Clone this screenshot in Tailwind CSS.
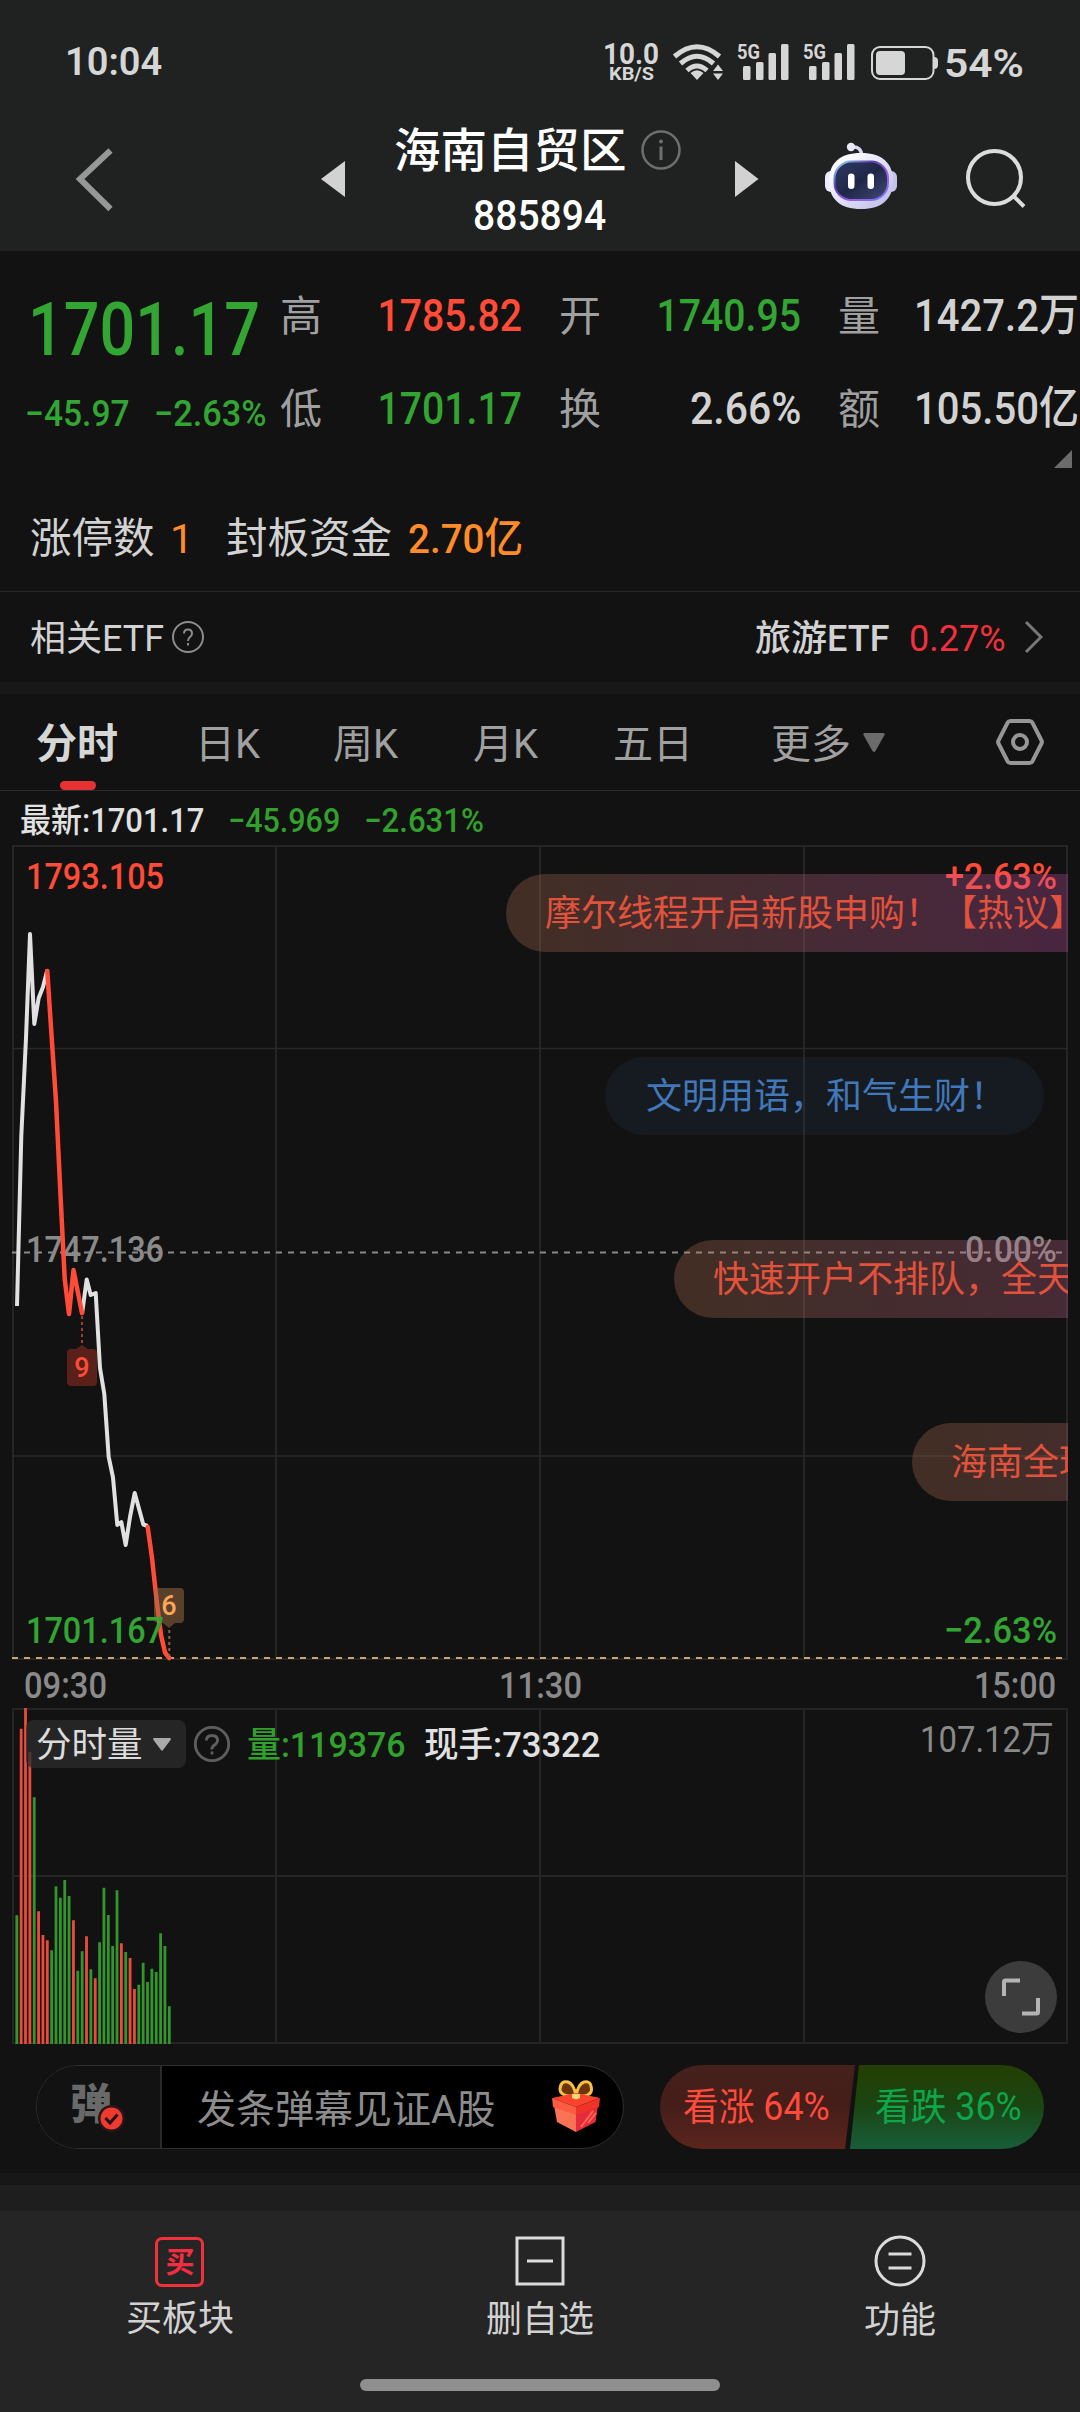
<!DOCTYPE html>
<html lang="zh-CN">
<head>
<meta charset="utf-8">
<meta name="viewport" content="width=1080">
<title>海南自贸区 885894</title>
<script src="https://cdn.jsdelivr.net/npm/@tailwindcss/browser@4"></script>
</head>
<body class="w-[1080px] h-[2412px] overflow-hidden bg-[#121212] text-[#d2d2d2] font-[Roboto,'Noto_Sans_CJK_SC',sans-serif] whitespace-nowrap">

<!-- status bar + title -->
<header class="h-[251px] bg-[#202221]">
  <div class="h-[124px] pl-[65px] pr-[56px] flex items-center justify-between">
    <span class="text-[38px] leading-none font-semibold text-[#d6d6d6]">10:04</span>
    <svg class="w-[424px] h-[124px]" viewBox="600 0 424 124" fill="#d6d6d6">
      <text x="603" y="64" font-size="29" font-weight="700" textLength="56" lengthAdjust="spacingAndGlyphs">10.0</text>
      <text x="609" y="80" font-size="19" font-weight="700" textLength="45" lengthAdjust="spacingAndGlyphs">KB/S</text>
      <g fill="none" stroke="#d6d6d6" stroke-width="5">
        <path d="M674.500 56.500Q697 37 719.500 56.500"/>
        <path d="M680.500 63.500Q697 49 713.500 63.500"/>
        <path d="M687 70.500Q697 61.500 707 70.500"/>
      </g>
      <path d="M690.500 73Q697 67.500 703.500 73L697 80ZM713 71h10l-5-6.500ZM713 73.500h10l-5 6.500Z"/>
      <text x="737" y="59" font-size="21" font-weight="700" textLength="23" lengthAdjust="spacingAndGlyphs">5G</text>
      <rect x="743" y="66" width="7.500" height="14" rx="1.500"/><rect x="756" y="62" width="7.500" height="18" rx="1.500"/><rect x="768.500" y="53" width="7.500" height="27" rx="1.500"/><rect x="781" y="44" width="7.500" height="36" rx="1.500"/>
      <text x="803" y="59" font-size="21" font-weight="700" textLength="23" lengthAdjust="spacingAndGlyphs">5G</text>
      <rect x="809" y="66" width="7.500" height="14" rx="1.500"/><rect x="822" y="62" width="7.500" height="18" rx="1.500"/><rect x="834.500" y="53" width="7.500" height="27" rx="1.500"/><rect x="847" y="44" width="7.500" height="36" rx="1.500"/>
      <rect x="872" y="47" width="61.500" height="32" rx="8" fill="none" stroke="#d6d6d6" stroke-width="2"/>
      <rect x="876" y="51" width="29" height="24" rx="4"/>
      <path d="M934 57q4 0 4 4v4q0 4-4 4Z"/>
      <text x="944" y="76.500" font-size="38" font-weight="600" textLength="80" lengthAdjust="spacingAndGlyphs">54%</text>
    </svg>
  </div>
  <div class="h-[127px] flex items-start">
    <svg class="w-[390px] h-[127px]" viewBox="0 124 390 127">
      <path d="M110.500 150.500L80 179L110.500 209" fill="none" stroke="#979797" stroke-width="6"/>
      <path d="M321 179L345 161V197Z" fill="#d2d2d2"/>
    </svg>
    <div class="w-[300px] flex flex-col">
      <div class="h-[52px] pl-[4px] flex items-center gap-[14px]">
        <h1 class="pt-[2px] text-[46.500px] leading-[52px] font-medium text-white">海南自贸区</h1>
        <svg class="w-[40px] h-[40px]" viewBox="0 0 40 40"><circle cx="20" cy="20" r="18.500" fill="none" stroke="#6e6e6e" stroke-width="2.500"/><path d="M20 16.500V30" stroke="#6e6e6e" stroke-width="3"/><circle cx="20" cy="11.500" r="2" fill="#6e6e6e"/></svg>
      </div>
      <div class="h-[60px] w-[300px] text-center text-[42px] leading-[80px] font-medium text-white"><span class="inline-block scale-x-[.93]">885894</span></div>
    </div>
    <svg class="w-[390px] h-[127px]" viewBox="690 124 390 127">
      <defs>
        <linearGradient id="head" x1="0" y1="0" x2="1" y2="1"><stop offset=".2" stop-color="#fbfaff"/><stop offset="1" stop-color="#b9b8e6"/></linearGradient>
        <linearGradient id="visor" x1="0" y1="0" x2="1" y2="1"><stop offset="0" stop-color="#323a66"/><stop offset=".5" stop-color="#1f2748"/><stop offset="1" stop-color="#414a74"/></linearGradient>
        <linearGradient id="rim" x1="0" y1="0" x2="1" y2="1"><stop offset="0" stop-color="#8fe6f5"/><stop offset=".35" stop-color="#5b3fae"/><stop offset=".65" stop-color="#a05ae6"/><stop offset="1" stop-color="#6d7bff"/></linearGradient>
      </defs>
      <path d="M735 161L758.500 179L735 197Z" fill="#d2d2d2"/>
      <path d="M852 147Q861 146 862 156" fill="none" stroke="#d9d6f2" stroke-width="3.500"/>
      <circle cx="851" cy="147" r="4.200" fill="#eae8fb"/>
      <rect x="825" y="171" width="12" height="21" rx="6" fill="#eceafb"/><rect x="885" y="171" width="12" height="21" rx="6" fill="#c6c4ea"/>
      <path d="M861 153C882 153 893 163 893 181C893 199 882 209 861 209C840 209 829 199 829 181C829 163 840 153 861 153Z" fill="url(#head)"/>
      <rect x="834.500" y="161.500" width="53.500" height="38.500" rx="17" fill="url(#visor)" stroke="url(#rim)" stroke-width="2"/>
      <rect x="848" y="173.500" width="6.500" height="15.500" rx="3.250" fill="#fff"/><rect x="867.500" y="173.500" width="6.500" height="15.500" rx="3.250" fill="#fff"/>
      <circle cx="994.500" cy="177.500" r="26.500" fill="none" stroke="#dcdcdc" stroke-width="4"/>
      <path d="M1013.500 196L1024 206.500" stroke="#dcdcdc" stroke-width="4"/>
    </svg>
  </div>
</header>

<!-- quote -->
<section class="h-[340px] flex flex-col">
  <div class="h-[229px] pt-[18px] flex">
    <div class="w-[280px]">
      <div class="h-[118px] pl-[28px] text-[74px] leading-[121px] font-medium text-[#32a532]"><span class="inline-block origin-left scale-x-[.85]">1701.17</span></div>
      <div class="h-[52px] pl-[25px] text-[36.500px] leading-[54px] font-medium text-[#32a532] flex">
        <span class="w-[129px]"><span class="inline-block origin-left scale-x-[.92]">−45.97</span></span>
        <span class="inline-block origin-left scale-x-[.94]">−2.63%</span>
      </div>
    </div>
    <dl class="grid grid-cols-[60px_182px_97px_182px_96px_183px] auto-rows-[93px] leading-[94px] text-[45px] font-medium">
      <dt class="pt-[1px] text-[42px] font-normal text-[#a0a0a0]">高</dt><dd class="text-right text-[#ff4b37]"><span class="inline-block origin-right scale-x-[.87]">1785.82</span></dd>
      <dt class="pt-[1px] pl-[37px] text-[42px] font-normal text-[#a0a0a0]">开</dt><dd class="text-right text-[#32a532]"><span class="inline-block origin-right scale-x-[.87]">1740.95</span></dd>
      <dt class="pt-[1px] pl-[37px] text-[42px] font-normal text-[#a0a0a0]">量</dt><dd class="pl-[17px]"><span class="inline-block origin-left scale-x-[.89]">1427.2万</span></dd>
      <dt class="pt-[1px] text-[42px] font-normal text-[#a0a0a0]">低</dt><dd class="text-right text-[#32a532]"><span class="inline-block origin-right scale-x-[.87]">1701.17</span></dd>
      <dt class="pt-[1px] pl-[37px] text-[42px] font-normal text-[#a0a0a0]">换</dt><dd class="text-right"><span class="inline-block origin-right scale-x-[.91]">2.66%</span></dd>
      <dt class="pt-[1px] pl-[37px] text-[42px] font-normal text-[#a0a0a0]">额</dt><dd class="pl-[17px]"><span class="inline-block origin-left scale-x-[.89]">105.50亿</span></dd>
    </dl>
  </div>
  <div class="h-[111px] pl-[30px] flex items-center text-[41.500px] leading-[60px] relative">
    <svg class="absolute right-[8px] -top-[30px] w-[18px] h-[18px]" viewBox="0 0 18 18"><path d="M18 0V18H0Z" fill="#6b6b6b"/></svg>
    <div class="w-full h-[60px] pt-[3px] flex">
      <span class="w-[140px]">涨停数</span><span class="w-[56px] text-[#ff8c28]">1</span>
      <span class="w-[182px]">封板资金</span><span class="inline-block origin-left scale-x-[.93] text-[#ff8c28] font-medium">2.70亿</span>
    </div>
  </div>
</section>

<!-- related ETF -->
<section class="h-[91px] border-t border-[#262626] pl-[30px] pr-[37px] flex items-center justify-between text-[36px] leading-none">
  <div class="flex items-center gap-[7px]"><span class="pt-[4px]">相关ETF</span>
    <svg class="w-[34px] h-[34px]" viewBox="0 0 34 34" fill="none" stroke="#8c8c8c" stroke-width="2"><circle cx="17" cy="17" r="15"/><path d="M13 13.500Q13 9.500 17 9.500T21 13.500Q21 15.500 19 17T17 21"/><path d="M17 23v2.500"/></svg>
  </div>
  <div class="flex items-center"><span class="pt-[3px] font-medium w-[154px]">旅游ETF</span><span class="pt-[3px] w-[115px] text-[#f0303c]">0.27%</span>
    <svg class="w-[19px] h-[34px]" viewBox="0 0 19 34"><path d="M2 2L17 17L2 32" fill="none" stroke="#787878" stroke-width="3"/></svg>
  </div>
</section>
<div class="h-[12px] bg-[#171717]"></div>

<!-- period tabs -->
<nav class="h-[97px] border-b border-[#2d2d2d] pl-[36px] pr-[35px] flex items-center text-[40px] leading-none text-[#a0a0a0]">
  <div class="w-[159px] h-full pt-[5px] flex items-center relative font-bold text-[#d6d6d6] text-[41px]">分时<i class="absolute left-[24px] bottom-0 w-[36px] h-[9px] rounded-full bg-[#e63232]"></i></div>
  <div class="w-[138px] pt-[5px]">日K</div>
  <div class="w-[140px] pt-[5px]">周K</div>
  <div class="w-[140px] pt-[5px]">月K</div>
  <div class="w-[158px] pt-[5px]">五日</div>
  <div class="flex-1 flex items-center gap-[12px]"><span class="pt-[5px]">更多</span><svg class="w-[22px] h-[19px]" viewBox="0 0 22 19"><path d="M2 0H20Q22.500 0 21.500 2L12.500 18Q11 20 9.500 18L.5 2Q-.5 0 2 0Z" fill="#6b6b6b"/></svg></div>
  <svg class="w-[50px] h-[48px]" viewBox="0 0 50 48" fill="none" stroke="#969696" stroke-width="4"><path stroke-linejoin="round" d="M15.500 3H34.500Q36.500 3 37.500 4.800L46.500 22.500Q47.300 24 46.500 25.500L37.500 43.200Q36.500 45 34.500 45H15.500Q13.500 45 12.500 43.200L3.500 25.500Q2.700 24 3.500 22.500L12.500 4.800Q13.500 3 15.500 3Z"/><circle cx="25" cy="24" r="7"/></svg>
</nav>

<div class="h-[54px] pt-[2px] pl-[20px] flex text-[33.500px] leading-[55px] font-medium">
  <span class="w-[208px] text-[#e1e1e1]"><span class="inline-block origin-left scale-x-[.925]">最新:1701.17</span></span>
  <span class="w-[136px] text-[#32a02d]"><span class="inline-block origin-left scale-x-[.91]">−45.969</span></span>
  <span class="text-[#32a02d]"><span class="inline-block origin-left scale-x-[.93]">−2.631%</span></span>
</div>

<!-- price chart -->
<section class="relative h-[863px]">
  <svg class="block w-[1080px] h-[863px]" viewBox="0 845 1080 863">
    <g fill="none" stroke="#252525" stroke-width="2">
      <path d="M13 846H1067V1659H13ZM276 846V1659M540 846V1659M804 846V1659"/>
      <path d="M12 1048.500H1068M12 1456H1068" stroke-width="1.500" stroke="#292929"/>
    </g>
    <path d="M12 1252.500H1068" stroke="#8a8a8a" stroke-width="2" stroke-dasharray="6 6"/>
    <path d="M12 1658H1068" stroke="#cda56e" stroke-width="2" stroke-dasharray="6 6"/>
    <g font-size="37" font-weight="500">
      <text x="26" y="889" textLength="138" lengthAdjust="spacingAndGlyphs" fill="#ff4b37">1793.105</text>
      <text x="26" y="1262" textLength="138" lengthAdjust="spacingAndGlyphs" fill="#8a8a8a">1747.136</text>
      <text x="945" y="889" textLength="112" lengthAdjust="spacingAndGlyphs" fill="#ff4b37">+2.63%</text>
      <text x="965" y="1262" textLength="92" lengthAdjust="spacingAndGlyphs" fill="#8a8a8a">0.00%</text>
      <text x="944" y="1643" textLength="113" lengthAdjust="spacingAndGlyphs" fill="#32a532">−2.63%</text>
      <g fill="#8a8a8a">
        <text x="24" y="1698" textLength="83" lengthAdjust="spacingAndGlyphs">09:30</text>
        <text x="499" y="1698" textLength="83" lengthAdjust="spacingAndGlyphs">11:30</text>
        <text x="974" y="1698" textLength="82" lengthAdjust="spacingAndGlyphs">15:00</text>
      </g>
    </g>
    <g fill="none" stroke-width="4" stroke-linejoin="round">
      <path stroke="#e1e1e1" d="M17 1306L21.300 1136L26 1038L30 934L34.300 1024L38.700 998L43 987L47.300 970"/>
      <path stroke="#e1e1e1" d="M82 1314L86.700 1279.500L90.700 1295L95.700 1293L100 1368L104.300 1394L108.700 1457L113 1477.500L117.300 1525L121.300 1522L125.700 1545L130 1517L134.700 1493L143.300 1524.500L147.700 1526"/>
      <path stroke="#ff4b37" stroke-width="4.500" stroke-linecap="round" d="M47.300 971L51.500 1035L56 1101.500L60.500 1195L64.700 1279L69 1314L73.500 1270L82 1313"/>
      <path stroke="#ff4b37" stroke-width="4.500" stroke-linecap="round" d="M147.700 1527L152 1558L156.700 1601L161 1635L165 1652.500L169.300 1658"/>
    </g>
    <path d="M82 1316V1344" stroke="#a53c2d" stroke-width="2" stroke-dasharray="3 3"/>
    <path d="M71 1349H76L82 1345L88 1349H93Q97 1349 97 1353V1382Q97 1386 93 1386H71Q67 1386 67 1382V1353Q67 1349 71 1349Z" fill="#5a211b"/>
    <text x="82" y="1377" font-size="27" font-weight="500" text-anchor="middle" fill="#ff4b37">9</text>
    <path d="M169.300 1630V1656" stroke="#8c6440" stroke-width="2" stroke-dasharray="3 3"/>
    <path d="M158 1588H180Q184 1588 184 1592V1619Q184 1623 180 1623H175L169 1628L163 1623H158Q154 1623 154 1619V1592Q154 1588 158 1588Z" fill="#a06e41" fill-opacity=".5"/>
    <text x="169" y="1615" font-size="27" font-weight="500" text-anchor="middle" fill="#ffa55a">6</text>
    <text x="26" y="1643" font-size="37" font-weight="500" textLength="138" lengthAdjust="spacingAndGlyphs" fill="#32a532">1701.167</text>
  </svg>
  <!-- live comments floating over the chart -->
  <div class="absolute inset-y-0 left-[12px] right-[12px] overflow-hidden text-[36px] leading-[81px] text-[#e1523c]">
    <div class="absolute left-[494px] top-[29px] h-[78px] w-[620px] pl-[39px] rounded-full bg-linear-to-r from-[#b2704e]/30 to-[#cd4eb4]/30">摩尔线程开启新股申购！【热议】</div>
    <div class="absolute left-[593px] top-[212px] h-[78px] w-[439px] pl-[41px] rounded-full bg-[#325078]/15 text-[#4178b9]">文明用语，和气生财！</div>
    <div class="absolute left-[662px] top-[395px] h-[78px] w-[740px] pl-[39px] rounded-full bg-linear-to-r from-[#b2704e]/30 to-[#cd4eb4]/30">快速开户不排队，全天候</div>
    <div class="absolute left-[900px] top-[578px] h-[78px] w-[740px] pl-[39px] rounded-full bg-linear-to-r from-[#b2704e]/30 to-[#cd4eb4]/30">海南全球</div>
  </div>
</section>

<!-- volume chart -->
<section class="relative h-[357px]">
  <svg class="block w-[1080px] h-[336px]" viewBox="0 1708 1080 336">
    <path d="M13 1709H1067V2043H13ZM276 1709V2043M540 1709V2043M804 1709V2043M12 1876H1068" fill="none" stroke="#252525" stroke-width="2"/>
    <path id="up" stroke="#eb4b3a" stroke-width="2.800" fill="none"/>
    <path id="down" stroke="#32962d" stroke-width="2.800" fill="none"/>
    <text x="920" y="1752" font-size="37" textLength="134" lengthAdjust="spacingAndGlyphs" fill="#8a8a8a">107.12万</text>
  </svg>
  <div class="absolute left-[26px] top-[12px] h-[48px] flex items-center text-[35.500px] leading-[51px]">
    <div class="w-[160px] h-[48px] pl-[10px] rounded-lg bg-[#2c2c2c]/75 flex items-center gap-[10px] text-[#dcdcdc]"><span class="pt-[3px]">分时量</span><svg class="w-[18px] h-[13px]" viewBox="0 0 18 13"><path d="M1 0H17Q18.500 .5 17.500 2L10 12Q9 13.500 8 12L.5 2Q-.5 .5 1 0Z" fill="#aaa"/></svg></div>
    <svg class="ml-[7px] w-[38px] h-[38px]" viewBox="0 0 38 38" fill="none" stroke="#5f5f5f" stroke-width="2.800"><circle cx="19" cy="19" r="16.700"/><path d="M13.500 15.500Q13.500 10.500 19 10.500T24.500 15.500Q24.500 18 21.500 20T19 24.500"/><path d="M19 26.500v3"/></svg>
    <span class="ml-[16px] w-[177px] pt-[3px] font-medium text-[#32a02d]"><span class="inline-block origin-left scale-x-[.955]">量:119376</span></span>
    <span class="pt-[3px] font-medium text-[#e1e1e1]"><span class="inline-block origin-left scale-x-[.973]">现手:73322</span></span>
  </div>
  <button class="absolute left-[985px] top-[253px] w-[72px] h-[72px] rounded-full bg-[#3c3c3c]">
    <svg class="w-[72px] h-[72px]" viewBox="0 0 72 72" fill="none" stroke="#b4b4b4" stroke-width="4"><path d="M19 35V21Q19 19.500 20.500 19.500H35M53 37V51Q53 52.500 51.500 52.500H37"/></svg>
  </button>
</section>

<!-- comment bar and vote -->
<section class="h-[108px] px-[36px] flex items-start">
  <div class="w-[588px] h-[84px] rounded-full border border-[#2e2e2e] bg-black overflow-hidden flex items-center">
    <div class="w-[125px] h-full bg-[#121212] border-r-2 border-[#2a2a2a]">
      <svg class="w-[122px] h-[82px]" viewBox="37 2066 122 82">
        <text x="70" y="2118.500" font-size="42" font-weight="900" fill="#696969">弹</text>
        <circle cx="111.500" cy="2118.500" r="13.500" fill="#2a1715"/><circle cx="111.500" cy="2118.500" r="11" fill="#ee3a30"/>
        <path d="M105.500 2118L110 2123L117.500 2114.500" fill="none" stroke="#241010" stroke-width="3"/>
      </svg>
    </div>
    <span class="w-[354px] pt-[5px] pl-[35px] text-[39px] leading-[82px] text-[#8c8c8c]">发条弹幕见证A股</span>
    <svg class="w-[54px] h-[56px] ml-[32px]" viewBox="548 2079 54 56">
      <path d="M576 2096Q560 2097 560 2089Q561 2080 568 2082Q574 2084 576 2096Q578 2084 584 2082Q591 2080 591.500 2089Q592 2097 576 2096Z" fill="#6b3508" stroke="#f9bd4a" stroke-width="3"/>
      <path d="M554 2105L576 2114V2132L557 2122Z" fill="#fb7357"/><path d="M598 2105L576 2114V2132L595.500 2122Z" fill="#e72a3c"/>
      <path d="M552 2098L576 2093L600 2098L576 2107Z" fill="#f8442f"/>
      <path d="M552 2098L576 2107V2115L553 2107Z" fill="#fb5b41"/><path d="M600 2098L576 2107V2115L599 2107Z" fill="#ef3328"/>
      <path d="M581 2127L593 2111M588 2123L596 2113M565 2125L572 2115" stroke="#ff6a50" stroke-width="2"/>
      <path d="M572 2094h8v4l-4 1.500l-4-1.500Z" fill="#ffd670"/>
    </svg>
  </div>
  <div class="ml-[36px] w-[384px] h-[84px] rounded-full overflow-hidden flex text-[38px] leading-[85px]">
    <div class="w-[195px] pl-[23px] bg-linear-to-b from-[#46201c] via-[#451e1a] to-[#5c241d] text-[#ff4b3c] [clip-path:polygon(0_0,100%_0,185px_100%,0_100%)]"><span class="inline-block origin-left scale-x-[.94]">看涨 64%</span></div>
    <div class="-ml-[5px] w-[194px] pl-[25px] bg-linear-to-b from-[#233f02] via-[#1a4513] to-[#175f39] text-[#0fa54b] [clip-path:polygon(9px_0,100%_0,100%_100%,0_100%)]"><span class="inline-block origin-left scale-x-[.94]">看跌 36%</span></div>
  </div>
</section>
<div class="h-[12px] bg-[#171717]"></div>
<div class="h-[26px] bg-[#1e1e1e]"></div>

<!-- bottom bar -->
<footer class="h-[201px] bg-[#252525] flex flex-col items-center">
  <div class="w-full h-[168px] grid grid-cols-3 justify-items-center text-[36px] leading-[44px] text-[#d2d2d2]">
    <div class="pt-[26px] flex flex-col items-center gap-[10px]">
      <div class="w-[49px] h-[50px] pt-[2px] rounded-[7px] border-3 border-[#f0323c] flex items-center justify-center text-[29px] leading-none font-bold text-[#f52d41]">买</div>
      <span>买板块</span>
    </div>
    <div class="pt-[25px] flex flex-col items-center gap-[12px]">
      <svg class="w-[50px] h-[50px]" viewBox="0 0 50 50" fill="none" stroke="#dcdcdc" stroke-width="3"><path d="M2 2H48V48H2ZM12 25H38"/></svg>
      <span>删自选</span>
    </div>
    <div class="pt-[24px] flex flex-col items-center gap-[12px]">
      <svg class="w-[52px] h-[52px]" viewBox="0 0 52 52" fill="none" stroke="#dcdcdc" stroke-width="3"><circle cx="26" cy="26" r="24"/><path d="M14.500 19H37.500M14.500 33H37.500"/></svg>
      <span>功能</span>
    </div>
  </div>
  <div class="w-[360px] h-[12px] rounded-full bg-[#8f8f8f]"></div>
</footer>

<script>
  // [height in px, 1 = up / 0 = down] for each minute
  const bars = [[128.7,0],[315.3,1],[336,1],[292,1],[246.7,0],[132.7,1],[109,1],[103.7,1],[93.7,0],[157.7,0],[146.3,0],[164,0],[148,0],[123.7,1],[73.3,0],[92.7,0],[107.7,1],[74.7,0],[65.7,1],[101.7,0],[156.3,0],[129,0],[98,0],[153.7,0],[100.7,1],[92,0],[86,1],[55,1],[59.3,0],[81.3,0],[62,0],[75.3,0],[72,0],[110.7,0],[98,0],[37.7,0]];
  const d = ['', ''];
  bars.forEach(([h, up], i) => { d[up] += `M${(16.8 + i * 4.357).toFixed(2)} 2044v-${h}`; });
  document.getElementById('down').setAttribute('d', d[0]);
  document.getElementById('up').setAttribute('d', d[1]);
</script>
</body>
</html>
